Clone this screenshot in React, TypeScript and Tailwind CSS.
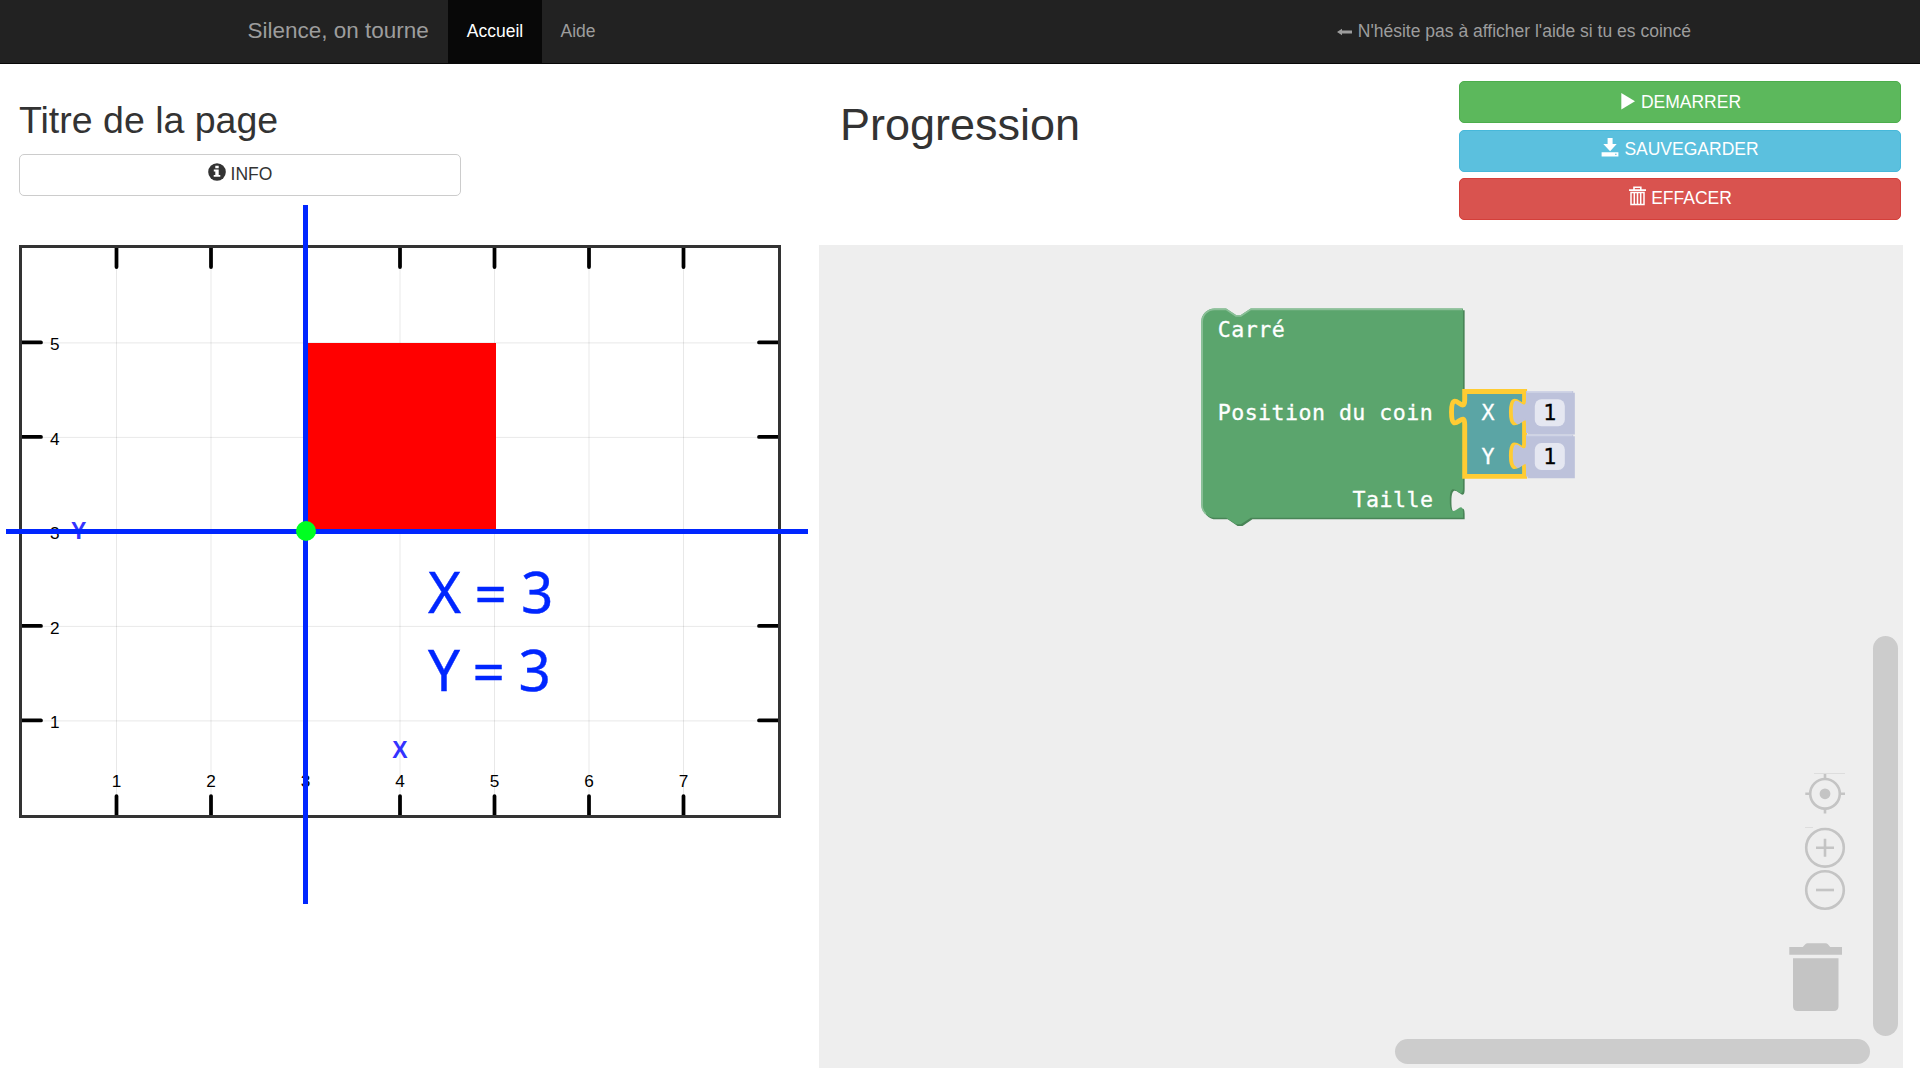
const UNIT = 94.5;
const columns = [1, 2, 3, 4, 5, 6, 7];
const rows = [1, 2, 3, 4, 5];
const gridX = (n: number) => 22.5 + n * UNIT;
const gridY = (n: number) => 815.4 - n * UNIT;

function Navbar() {
  return (
    <header className="flex h-16 items-stretch border-b border-[#080808] bg-[#222222] pl-[229px] pr-[229px] text-[17.5px] text-[#9d9d9d]">
      <div className="flex w-[219px] items-center pb-px pl-[18.5px] text-[22.5px] whitespace-nowrap">Silence, on tourne</div>
      <nav className="flex">
        <a className="flex w-[94px] items-center justify-center bg-[#080808] text-white">Accueil</a>
        <a className="flex items-center px-[18.5px]">Aide</a>
      </nav>
      <p className="ml-auto flex items-center gap-[5.5px] whitespace-nowrap">
        <svg width="15" height="8" viewBox="0 0 15 8" fill="currentColor">
          <path d="M0 4 5 .8V2.6H15V5.4H5V7.2Z" />
        </svg>
        N'hésite pas à afficher l'aide si tu es coincé
      </p>
    </header>
  );
}

function InfoIcon() {
  return (
    <svg width="18" height="18" viewBox="0 0 18 18" className="-mt-[4px]">
      <circle cx="9" cy="9" r="8.8" fill="#333333" />
      <path fill="#ffffff" d="M7.3 2.7h3.4v2.6H7.3zM5.8 6.6h4.9v5.3h1.6v1.9H5.7v-1.9h1.6V8.4H5.8z" />
    </svg>
  );
}

function PlayIcon() {
  return (
    <svg width="14" height="17" viewBox="0 0 14 17" fill="#ffffff" className="-mt-[2px]">
      <path d="M.3 0 14 8.3.3 16.6Z" />
    </svg>
  );
}

function SaveIcon() {
  return (
    <svg width="18" height="19" viewBox="0 0 18 19" className="-mt-[4px]">
      <path fill="#ffffff" d="M6.6 0h5v6h4.1L9.1 13.2 2.3 6h4.3zM.6 14.2h16.8V18.4H.6z" />
      <path fill="#5bc0de" d="M14 15.7h1.6v1H14z" />
    </svg>
  );
}

function TrashIcon() {
  return (
    <svg width="17" height="20" viewBox="0 0 17 20" fill="none" stroke="#ffffff" className="-mt-[4px]">
      <path strokeWidth="1.6" d="M0 4.1h17M5 3.8V1.2h6.8v2.6" />
      <path strokeWidth="1.5" d="M1.8 6.6h13.4M2 5.8v12.7h13V5.8M5.3 7v11M8.5 7v11M11.7 7v11" />
    </svg>
  );
}

function Board() {
  return (
    <svg width="818" height="720" viewBox="0 200 818 720" className="block" fontFamily="'Liberation Sans', Arial, sans-serif">
      <g stroke="#000000" strokeOpacity="0.09" strokeWidth="1">
        {columns.map((n) => (
          <line key={n} x1={gridX(n) - 0.5} x2={gridX(n) - 0.5} y1="248" y2="815" />
        ))}
        {rows.map((n) => (
          <line key={n} x1="22" x2="778" y1={gridY(n)} y2={gridY(n)} />
        ))}
      </g>
      <g stroke="#000000" strokeWidth="3.75" strokeLinecap="round">
        {columns.map((n) => (
          <path key={n} d={`M${gridX(n) - 0.5} 248V267M${gridX(n) - 0.5} 796V815`} />
        ))}
        {rows.map((n) => (
          <path key={n} d={`M22 ${gridY(n) - 0.5}H41M759 ${gridY(n) - 0.5}H778`} />
        ))}
      </g>
      <rect x="20.5" y="246.5" width="759" height="570" fill="none" stroke="#333333" strokeWidth="3" />
      <g fontSize="17.2" fill="#000000">
        {columns.map((n) => (
          <text key={n} x={gridX(n) - 0.5} y="786.5" textAnchor="middle">{n}</text>
        ))}
        {rows.map((n) => (
          <text key={n} x="50" y={gridY(n) + 7.2}>{n}</text>
        ))}
      </g>
      <g fontSize="23" fontWeight="bold" fill="#3333ff" textAnchor="middle">
        <text x="400" y="758">X</text>
        <text x="78.7" y="539">Y</text>
      </g>
      <rect x="308" y="343" width="188" height="187" fill="#ff0000" />
      <rect x="303" y="205" width="5" height="699" fill="#0026ff" />
      <rect x="6" y="529" width="802" height="5" fill="#0026ff" />
      <circle cx="306" cy="531" r="10" fill="#00ff21" />
      <g
        fontFamily="'Noto Sans', 'Open Sans', sans-serif"
        fontSize="56.5"
        fill="#0026ff"
        stroke="#0026ff"
        strokeWidth="0.4"
      >
        <text x="428 474.5 521" y="613 614 613">X=3</text>
        <text x="428 472.5 518.5" y="691 692 691">Y=3</text>
      </g>
    </svg>
  );
}

function NumberBlock({ y }: { y: number }) {
  const shape = "M0 0H28.6V25.4H0V20c0-10-8 8-8-7.5s8 2.5 8-7.5z";
  return (
    <g>
      <g transform={`translate(1526 ${y}) scale(1.65)`}>
        <path d={shape} fill="#bdc2db" transform="translate(1 1)" />
        <path d={shape} fill="#bdc2db" />
        <path d="M0.5 0.5H28.1" fill="none" stroke="#d0d4e6" />
      </g>
      <rect x="1534.8" y={y + 8.3} width="30" height="27" rx="6.6" fill="#e5e7f1" />
      <text x="1549.7" y={y + 29} fill="#000000" stroke="#000000" strokeWidth="0.3" textAnchor="middle">1</text>
    </g>
  );
}

function Blocks() {
  const command =
    "M0 8A8 8 0 0 1 8 0H15l6 4h3l6-4H158.6V55c0 10-8-8-8 7.5s8-2.5 8 7.5V108.6c0 10-8-8-8 7.5s8-2.5 8 7.5V126.8H30l-6 4h-3l-6-4H8A8 8 0 0 1 0 118.8Z";
  const point =
    "M0 0H36.3V5c0 10-8-8-8 7.5s8-2.5 8 7.5V31.5c0 10-8-8-8 7.5s8-2.5 8 7.5V51.5H0V20c0-10-8 8-8-7.5s8 2.5 8-7.5Z";
  return (
    <svg
      width="400"
      height="240"
      viewBox="1190 295 400 240"
      className="absolute top-[50.5px] left-[371.5px]"
      fontFamily="'DejaVu Sans Mono', monospace"
      fontSize="21.6"
      fill="#ffffff"
    >
      <g transform="translate(1201.3 308.5) scale(1.65)">
        <path d={command} fill="#498457" transform="translate(1 1)" />
        <path d={command} fill="#5ba56d" />
        <path
          d="M2.7 124.5A7.5 7.5 0 0 1 .5 118.5V8A7.5 7.5 0 0 1 8 .5H15l6 4h3l6-4H158.1"
          fill="none"
          stroke="#8cc099"
        />
      </g>
      <g stroke="#ffffff" strokeWidth="0.3">
        <text x="1217.7" y="336.7" textLength="67">Carré</text>
        <text x="1217.7" y="419.7" textLength="215">Position du coin</text>
        <text x="1352.5" y="506.7" textLength="80.5">Taille</text>
      </g>
      <g transform="translate(1464.7 391.4) scale(1.65)">
        <path d={point} fill="#5ba5a5" stroke="#ffcc33" strokeWidth="3" />
      </g>
      <g stroke="#ffffff" strokeWidth="0.3" textAnchor="middle">
        <text x="1488" y="419.7">X</text>
        <text x="1488" y="464">Y</text>
      </g>
      <NumberBlock y={391} />
      <NumberBlock y={434.7} />
    </svg>
  );
}

function WorkspaceControls() {
  return (
    <svg width="70" height="260" viewBox="1780 770 70 260" className="absolute top-[525.5px] left-[961.5px]">
      <g fill="none" stroke="#c4c4c4" strokeWidth="2.6">
        <circle cx="1825" cy="793.8" r="14.8" />
        <path d="M1825 774v5M1825 808.5v5M1805.3 793.8h5M1840 793.8h5" />
        <circle cx="1825" cy="847.8" r="18.8" />
        <path d="M1816 847.8h18M1825 838.8v18" />
        <circle cx="1825" cy="890" r="18.8" />
        <path d="M1816 890h18" />
      </g>
      <path d="M1814 773.5h31M1805 827.5h8" stroke="#dddddd" />
      <circle cx="1825" cy="793.8" r="5.4" fill="#c4c4c4" />
      <path
        fill="#c4c4c4"
        d="M1789.3 947h13.5l2.5-2.8q1-1 2.3-1h18q1.3 0 2.3 1l2.3 2.8H1842v7.7h-52.7ZM1793 958.3h45.5v48q0 4.7-4.7 4.7h-36.1q-4.7 0-4.7-4.7Z"
      />
    </svg>
  );
}

function Workspace() {
  return (
    <section className="relative mt-[24.5px] ml-[0.5px] h-[823.5px] w-[1084px] bg-[#eeeeee]">
      <Blocks />
      <WorkspaceControls />
      <div className="absolute top-[391.5px] left-[1054px] h-[400px] w-[25px] rounded-full bg-[#cccccc]" />
      <div className="absolute top-[794.5px] left-[576px] h-[25px] w-[475px] rounded-full bg-[#cccccc]" />
    </section>
  );
}

export default function App() {
  return (
    <div className="h-[1079px] w-[1920px] overflow-hidden bg-white font-['Liberation_Sans',Arial,sans-serif] text-[17.5px] text-[#333333]">
      <Navbar />
      <main className="flex">
        <section className="w-[818px] shrink-0">
          <div className="h-[136px] pt-[36px] pl-[19px]">
            <h2 className="h-[54px] text-[37.5px] leading-[41px] whitespace-nowrap">Titre de la page</h2>
            <button className="flex h-[42px] w-[442px] items-center justify-center gap-[5px] rounded-[5px] border border-[#cccccc] pb-[2px]">
              <InfoIcon />
              INFO
            </button>
          </div>
          <Board />
        </section>
        <section className="w-[1102px]">
          <div className="flex h-[156px] justify-between pr-[19px] pl-[22px]">
            <h1 className="pt-[36px] text-[45px] leading-[50px]">Progression</h1>
            <div className="flex w-[442px] flex-col gap-[7px] pt-[17px] text-white">
              <button className="flex h-[42px] shrink-0 items-center justify-center gap-[6px] rounded-[5px] border border-[#4cae4c] bg-[#5cb85c] pl-[2px]">
                <PlayIcon />
                DEMARRER
              </button>
              <button className="flex h-[42px] shrink-0 items-center justify-center gap-[5px] rounded-[5px] border border-[#46b8da] bg-[#5bc0de] pb-[3px]">
                <SaveIcon />
                SAUVEGARDER
              </button>
              <button className="-mt-px flex h-[42px] shrink-0 items-center justify-center gap-[5px] rounded-[5px] border border-[#d43f3a] bg-[#d9534f] pb-[2px] pl-px">
                <TrashIcon />
                EFFACER
              </button>
            </div>
          </div>
          <Workspace />
        </section>
      </main>
    </div>
  );
}
